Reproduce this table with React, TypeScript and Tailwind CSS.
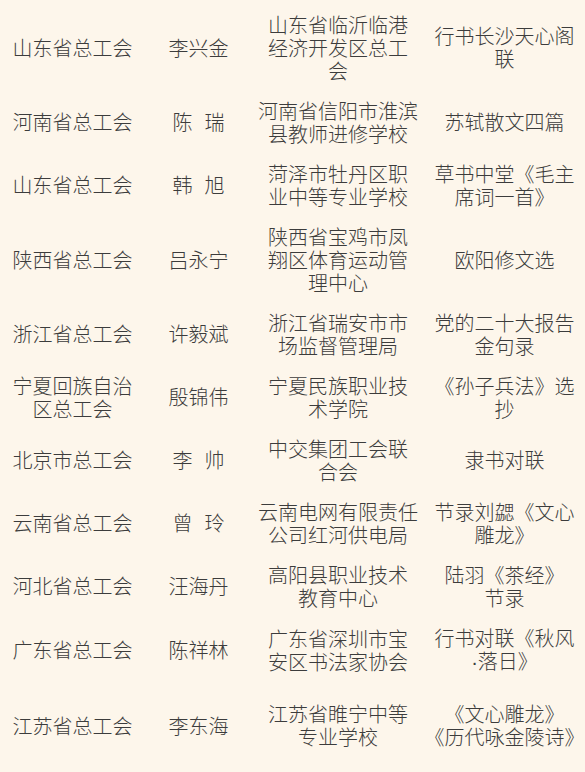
import React from 'react';

type Row = {
    org: string;
    name: string;
    unit: string;
    work: string;
    tall?: boolean;
};

// Lines are broken by hand so the wrapping matches the printed list
const rows: Row[] = [
    { org: '山东省总工会', name: '李兴金', unit: '山东省临沂临港\n经济开发区总工\n会', work: '行书长沙天心阁\n联' },
    { org: '河南省总工会', name: '陈 瑞', unit: '河南省信阳市淮滨\n县教师进修学校', work: '苏轼散文四篇' },
    { org: '山东省总工会', name: '韩 旭', unit: '菏泽市牡丹区职\n业中等专业学校', work: '草书中堂《毛主\n席词一首》' },
    { org: '陕西省总工会', name: '吕永宁', unit: '陕西省宝鸡市凤\n翔区体育运动管\n理中心', work: '欧阳修文选' },
    { org: '浙江省总工会', name: '许毅斌', unit: '浙江省瑞安市市\n场监督管理局', work: '党的二十大报告\n金句录' },
    { org: '宁夏回族自治\n区总工会', name: '殷锦伟', unit: '宁夏民族职业技\n术学院', work: '《孙子兵法》选\n抄' },
    { org: '北京市总工会', name: '李 帅', unit: '中交集团工会联\n合会', work: '隶书对联' },
    { org: '云南省总工会', name: '曾 玲', unit: '云南电网有限责任\n公司红河供电局', work: '节录刘勰《文心\n雕龙》' },
    { org: '河北省总工会', name: '汪海丹', unit: '高阳县职业技术\n教育中心', work: '陆羽《茶经》\n节录' },
    { org: '广东省总工会', name: '陈祥林', unit: '广东省深圳市宝\n安区书法家协会', work: '行书对联《秋风\n·落日》' },
    { org: '江苏省总工会', name: '李东海', unit: '江苏省睢宁中等\n专业学校', work: '《文心雕龙》\n《历代咏金陵诗》', tall: true },
];

const Name: React.FC<{ value: string }> = ({ value }) => {
    const parts = value.split(' ');
    if (parts.length === 1) return <>{value}</>;
    return (
        <>
            {parts[0]}
            <span className="inline-block w-[12px]" />
            {parts[1]}
        </>
    );
};

// the middle dot is set narrow, as in a latin face
const Text: React.FC<{ value: string }> = ({ value }) => {
    const parts = value.split('·');
    return (
        <>
            {parts.map((p, i) => (
                <React.Fragment key={i}>
                    {i > 0 && <span className="font-['Liberation_Sans']">·</span>}
                    {p}
                </React.Fragment>
            ))}
        </>
    );
};

const Cell: React.FC<{ children: React.ReactNode; tall?: boolean }> = ({ children, tall }) => (
    <div className={`flex items-center justify-center text-center py-[8.5px] ${tall ? 'min-h-[86px]' : ''}`}>
        <div className="whitespace-pre">{children}</div>
    </div>
);

const App: React.FC = () => {
    return (
        <div
            className="w-[585px] h-[772px] overflow-hidden bg-[#fdf6eb] text-[#3c3c3c] text-[20px] leading-[23px] font-light pt-[4px]"
            style={{ fontFamily: '"Noto Sans CJK SC", "Noto Sans", sans-serif' }}
        >
            <div className="grid grid-cols-[145px_107px_172px_161px]">
                {rows.map((row, i) => (
                    <React.Fragment key={i}>
                        <Cell tall={row.tall}>{row.org}</Cell>
                        <Cell tall={row.tall}>
                            <Name value={row.name} />
                        </Cell>
                        <Cell tall={row.tall}>{row.unit}</Cell>
                        <Cell tall={row.tall}>
                            <Text value={row.work} />
                        </Cell>
                    </React.Fragment>
                ))}
            </div>
        </div>
    );
};

export default App;
